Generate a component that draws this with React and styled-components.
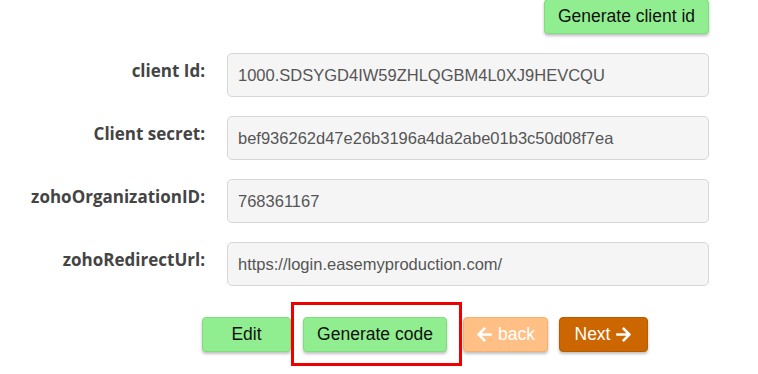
import React from 'react'
import styled, { createGlobalStyle } from 'styled-components'
import { FaArrowLeft, FaArrowRight } from 'react-icons/fa'

const GlobalStyle = createGlobalStyle`
  body {
    margin: 0;
    background: #fff;
    font-family: "Liberation Sans", Arial, sans-serif;
  }
`;

const Page = styled.div`
  width: 758px;
  height: 374px;
  overflow: hidden;
  position: relative;
`;

const TopBar = styled.div`
  display: flex;
  justify-content: flex-end;
  padding-right: 49px;
  margin-top: -1px;
`;

const Form = styled.div`
  display: grid;
  grid-template-columns: 206px 482px;
  column-gap: 21px;
  row-gap: 19px;
  margin-top: 19px;
`;

const Label = styled.label`
  font-family: "Open Sans", sans-serif;
  font-weight: 700;
  font-size: 17px;
  line-height: 22px;
  color: #444;
  text-align: right;
  padding-top: 7px;
  padding-right: 1px;
  white-space: nowrap;
`;

const Field = styled.div`
  box-sizing: border-box;
  height: 44px;
  padding: 0 10px;
  display: flex;
  align-items: center;
  background: #f5f5f5;
  border: 1px solid #d6d6d6;
  border-radius: 5px;
  font-size: 16.5px;
  color: #555;
  white-space: nowrap;
`;

const Actions = styled.div`
  display: flex;
  align-items: center;
  margin-top: 31px;
  padding-left: 202px;
`;

const Button = styled.button`
  box-sizing: border-box;
  height: 35px;
  width: ${p => p.$w}px;
  margin-right: ${p => p.$gap || 0}px;
  padding: 0;
  display: inline-flex;
  align-items: center;
  justify-content: center;
  gap: 5px;
  font-family: "Liberation Sans", Arial, sans-serif;
  font-size: 17.5px;
  border-radius: 4px;
  cursor: pointer;
  box-shadow: 0 2px 3px rgba(0, 0, 0, 0.25);
  background: ${p => p.$bg || '#90ee90'};
  border: 1px solid ${p => p.$border || '#7fdc7f'};
  color: ${p => p.$color || '#111'};
  svg {
    font-size: 17px;
  }
`;

const Highlight = styled.div`
  position: relative;
  margin-right: 16px;
  &::after {
    content: '';
    position: absolute;
    left: -12px;
    right: -15px;
    top: -15px;
    bottom: -14px;
    border: 3px solid #ee0000;
    pointer-events: none;
  }
`;

const fields = [
  ['client Id:', '1000.SDSYGD4IW59ZHLQGBM4L0XJ9HEVCQU'],
  ['Client secret:', 'bef936262d47e26b3196a4da2abe01b3c50d08f7ea'],
  ['zohoOrganizationID:', '768361167'],
  ['zohoRedirectUrl:', 'https://login.easemyproduction.com/'],
];

export default function App() {
  return (
    <Page>
      <GlobalStyle />
      <TopBar>
        <Button $w={165}>Generate client id</Button>
      </TopBar>
      <Form>
        {fields.map(([label, value]) => (
          <React.Fragment key={label}>
            <Label>{label}</Label>
            <Field>{value}</Field>
          </React.Fragment>
        ))}
      </Form>
      <Actions>
        <Button $w={89} $gap={12}>Edit</Button>
        <Highlight>
          <Button $w={144}>Generate code</Button>
        </Highlight>
        <Button $w={85} $gap={11} $bg="#ffbf85" $border="#f5b070" $color="#fff">
          <FaArrowLeft /> back
        </Button>
        <Button $w={89} $bg="#cc6600" $border="#b85c00" $color="#fff">
          Next <FaArrowRight />
        </Button>
      </Actions>
    </Page>
  )
}
